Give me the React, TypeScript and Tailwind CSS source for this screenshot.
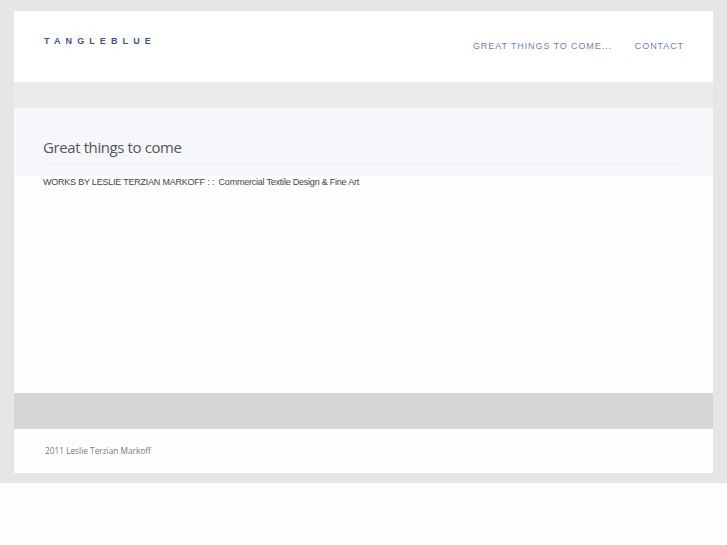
export default function App() {
  return (
    <div className="min-h-[545px] bg-[#fdfdfd]">
      <div className="bg-[#e6e6e6] pt-[11px] pb-[10px]">
        <div className="ml-[14px] w-[699px]">
          <header className="h-[71px] bg-white flex justify-between items-start">
            <div
              className="mt-[26px] ml-[30px] text-[9px] font-bold tracking-[5.1px] text-[#3a54a0] leading-none"
              style={{ fontFamily: '"Liberation Sans", Arial, sans-serif' }}
            >
              TANGLEBLUE
            </div>
            <nav
              className="mt-[31px] mr-[29px] flex gap-[23px] text-[9px] tracking-[0.9px] text-[#6b7eb8] leading-none"
              style={{ fontFamily: '"Liberation Sans", Arial, sans-serif' }}
            >
              <span>GREAT THINGS TO COME...</span>
              <span>CONTACT</span>
            </nav>
          </header>
          <div className="h-[26px] bg-[#ebebe9]" />
          <div className="h-[68px] bg-[#f6f7fb] px-[29px] pt-[29px]">
            <h1
              className="text-[15px] text-[#555555] leading-[20px] pb-[7px] border-b border-[#eceef0] w-[641px]"
              style={{ fontFamily: '"Open Sans", "Noto Sans", sans-serif', letterSpacing: '-0.4px' }}
            >
              Great things to come
            </h1>
          </div>
          <div className="h-[217px] bg-[#fefefe] px-[29px]">
            <p
              className="text-[9px] text-[#444444] leading-[12px] tracking-[-0.22px]"
              style={{ fontFamily: '"Liberation Sans", Arial, sans-serif' }}
            >
              WORKS BY LESLIE TERZIAN MARKOFF : :&nbsp; Commercial Textile Design &amp; Fine Art
            </p>
          </div>
          <div className="h-[36px] bg-[#d5d5d5]" />
          <footer className="h-[44px] bg-[#fefefe] px-[31px] pt-[16px]">
            <p
              className="text-[8.3px] text-[#7a7a7a] leading-[12px]"
              style={{ fontFamily: '"Open Sans", "Noto Sans", sans-serif' }}
            >
              2011 Leslie Terzian Markoff
            </p>
          </footer>
        </div>
      </div>
    </div>
  );
}
